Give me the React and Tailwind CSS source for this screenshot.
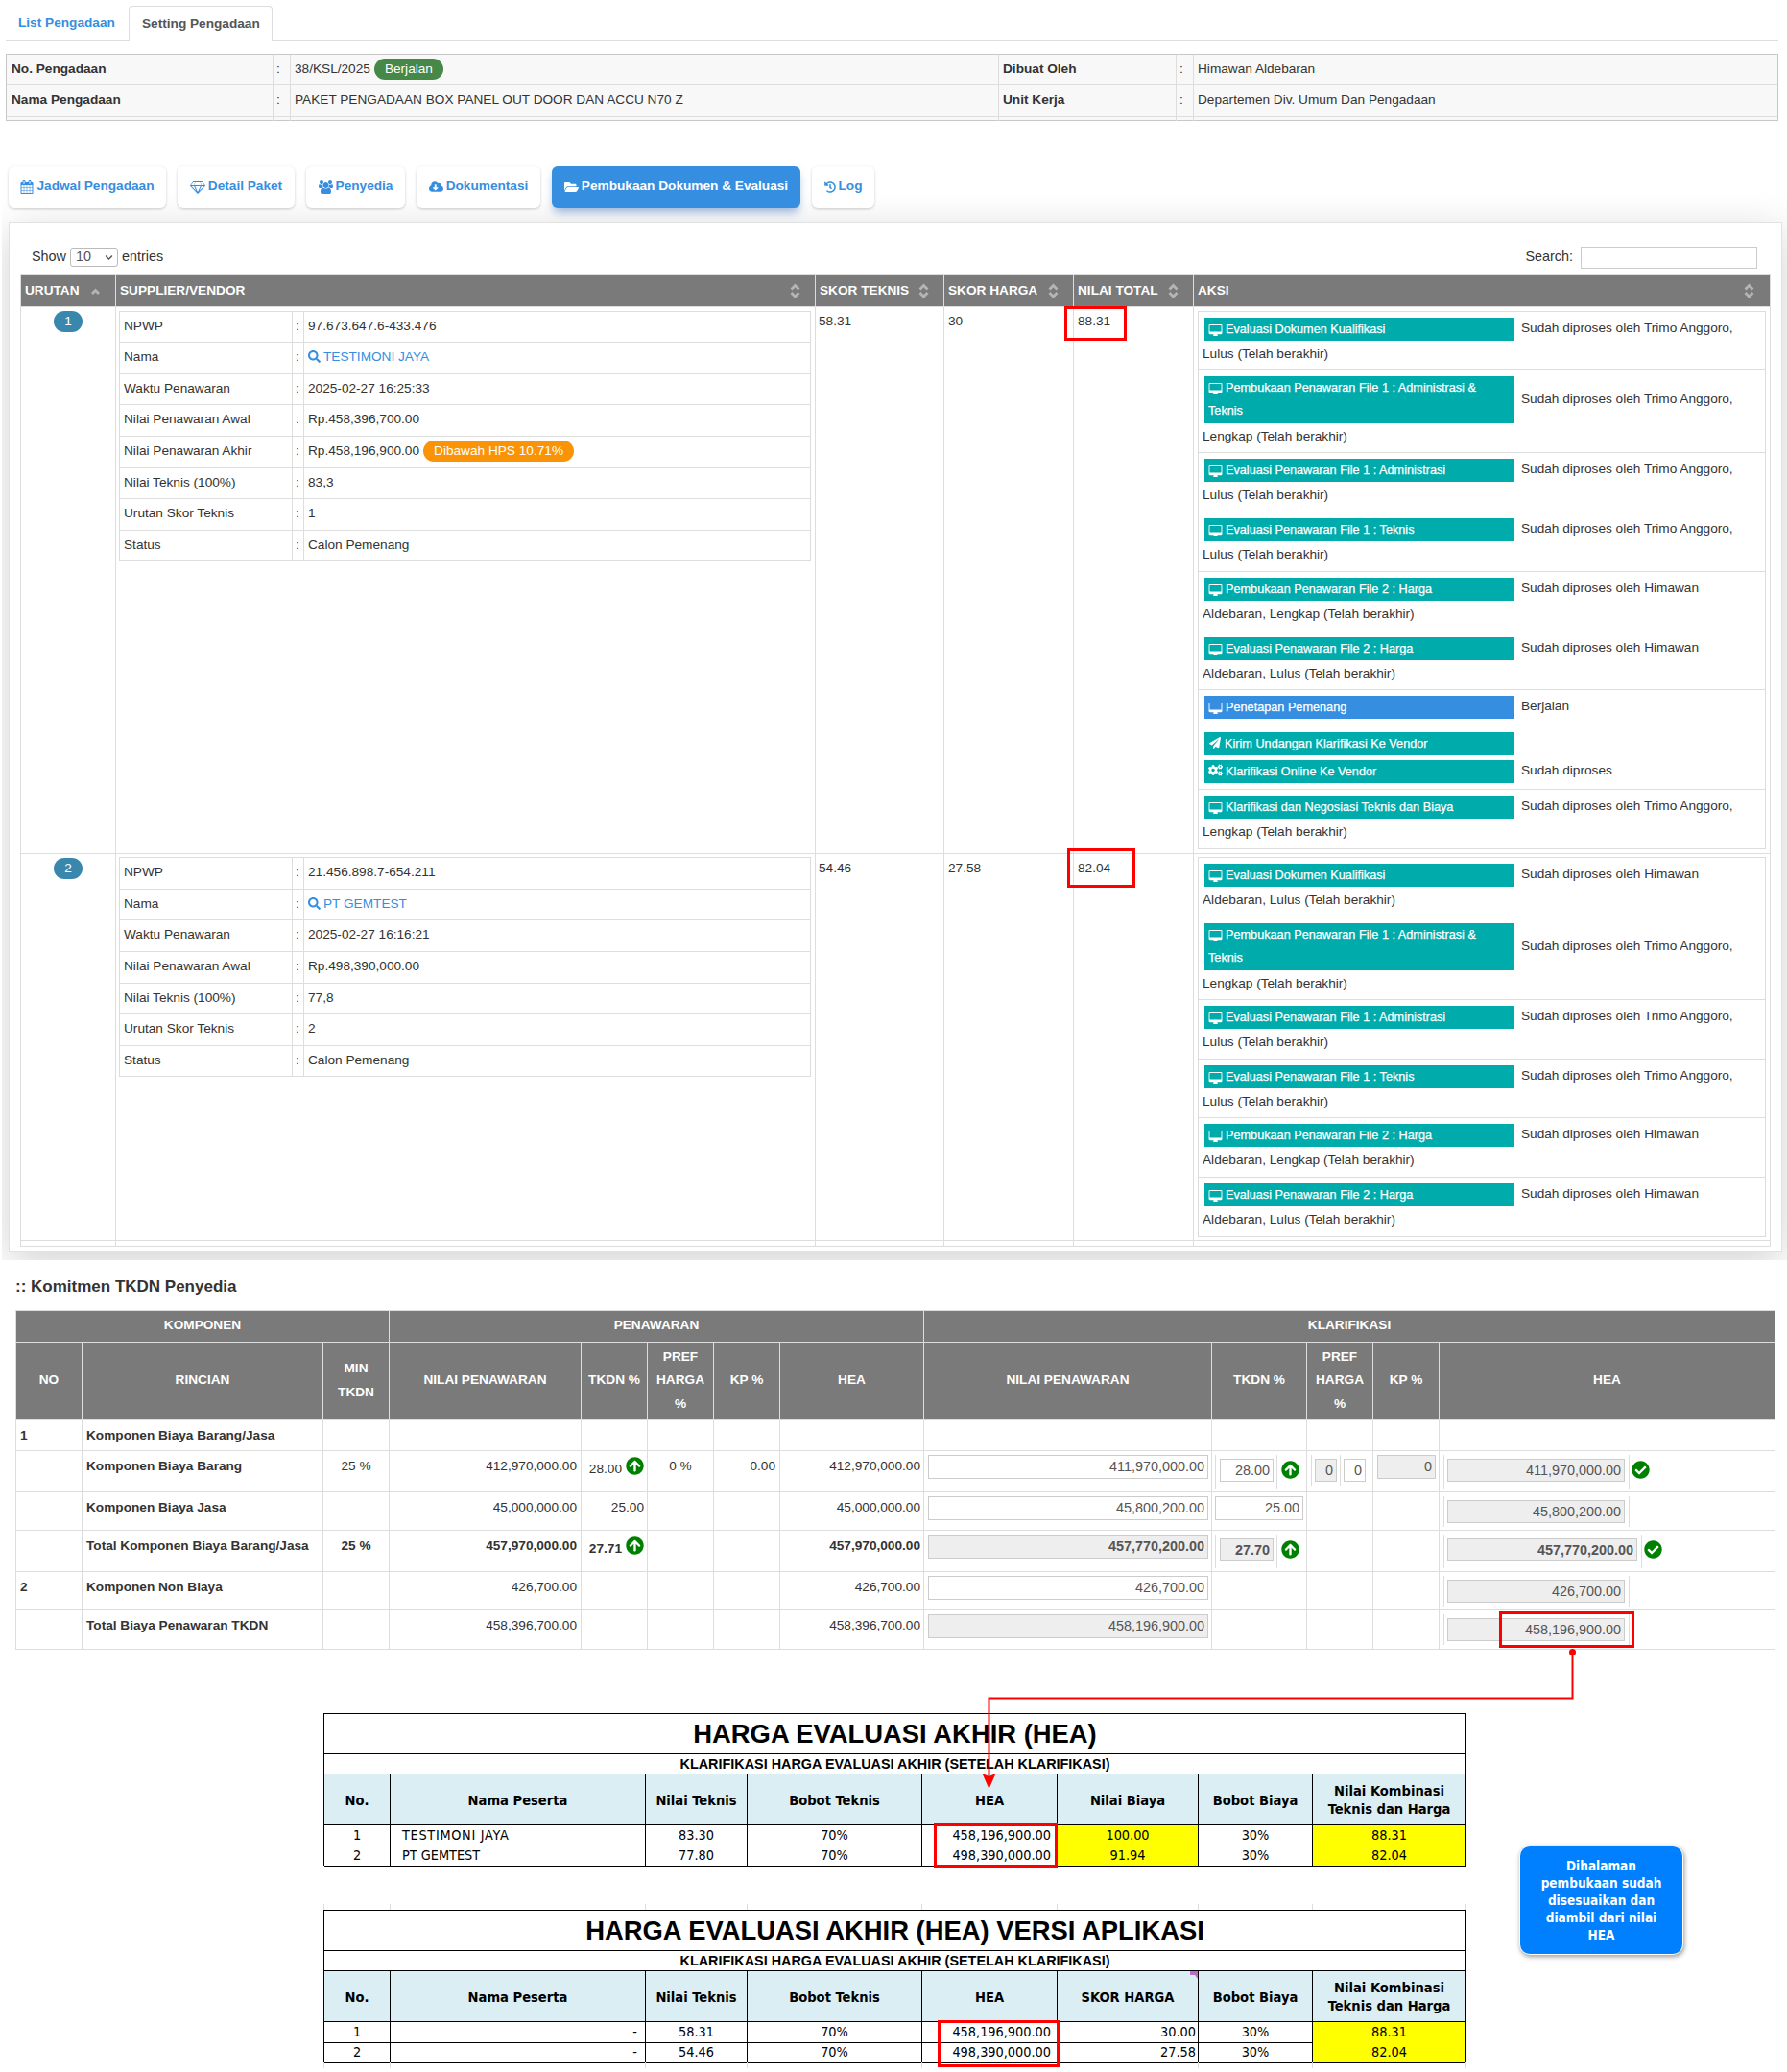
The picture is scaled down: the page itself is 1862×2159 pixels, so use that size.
import React from "react";
import {
  FaCloudDownloadAlt,
  FaFolderOpen,
  FaHistory,
  FaSearch,
  FaPaperPlane,
  FaCogs,
  FaArrowCircleUp,
  FaCheckCircle,
  FaChevronDown,
} from "react-icons/fa";

const Desktop = () => (
  <svg viewBox="0 0 2048 1792" className="inline-block h-[13px] w-[15px] shrink-0" fill="currentColor">
    <path d="M1856 992v-832q0-13-9.5-22.5t-22.5-9.5h-1600q-13 0-22.5 9.5t-9.5 22.5v832q0 13 9.5 22.5t22.5 9.5h1600q13 0 22.5-9.5t9.5-22.5zm128-832v1088q0 66-47 113t-113 47h-544q0 37 16 77.5t32 71 16 43.5q0 26-19 45t-45 19h-512q-26 0-45-19t-19-45q0-14 16-44t32-70 16-78h-544q-66 0-113-47t-47-113v-1088q0-66 47-113t113-47h1600q66 0 113 47t47 113z" />
  </svg>
);

const Calendar = () => (
  <svg viewBox="0 0 1792 1792" className="h-[14px] w-[14px]" fill="currentColor">
    <path d="M192 1664h288v-288h-288v288zm352 0h320v-288h-320v288zm-352-352h288v-320h-288v320zm352 0h320v-320h-320v320zm-352-384h288v-288h-288v288zm736 736h320v-288h-320v288zm-384-736h320v-288h-320v288zm768 736h288v-288h-288v288zm-384-352h320v-320h-320v320zm-352-864v-288q0-13-9.5-22.5t-22.5-9.5h-64q-13 0-22.5 9.5t-9.5 22.5v288q0 13 9.5 22.5t22.5 9.5h64q13 0 22.5-9.5t9.5-22.5zm736 864h288v-320h-288v320zm-384-384h320v-288h-320v288zm384 0h288v-288h-288v288zm32-480v-288q0-13-9.5-22.5t-22.5-9.5h-64q-13 0-22.5 9.5t-9.5 22.5v288q0 13 9.5 22.5t22.5 9.5h64q13 0 22.5-9.5t9.5-22.5zm384-64v1280q0 52-38 90t-90 38h-1408q-52 0-90-38t-38-90v-1280q0-52 38-90t90-38h128v-96q0-66 47-113t113-47h64q66 0 113 47t47 113v96h384v-96q0-66 47-113t113-47h64q66 0 113 47t47 113v96h128q52 0 90 38t38 90z" />
  </svg>
);

const Diamond = () => (
  <svg viewBox="0 0 2048 1792" className="h-[14px] w-[16px]" fill="currentColor">
    <path d="M212 768l623 665-300-665h-323zm812 772l349-772h-698zm-538-900l204-384h-262l-288 384h346zm727 793l623-665h-323zm-683-793h988l-204-384h-580zm1032 0h346l-288-384h-262zM1651 154l384 512q14 18 13 41.5t-17 40.5l-960 1024q-18 20-47 20t-47-20l-960-1024q-16-17-17-40.5t13-41.5l384-512q18-26 51-26h1152q33 0 51 26z" fillRule="evenodd" />
  </svg>
);

const Users = () => (
  <svg viewBox="0 0 1920 1792" className="h-[14px] w-[15px]" fill="currentColor">
    <path d="M593 896q-162 5-265 128h-134q-82 0-138-40.5t-56-118.5q0-353 124-353 6 0 43.5 21t97.5 42.5 119 21.5q67 0 133-23-5 37-5 66 0 139 81 256zm1071 637q0 120-73 189.5t-194 69.5h-874q-121 0-194-69.5t-73-189.5q0-53 3.5-103.5t14-109 26.5-108.5 43-97.5 62-81 85.5-53.5 111.5-20q10 0 43 21.5t73 48 107 48 135 21.5 135-21.5 107-48 73-48 43-21.5q61 0 111.5 20t85.5 53.5 62 81 43 97.5 26.5 108.5 14 109 3.5 103.5zm-1024-1277q0 106-75 181t-181 75-181-75-75-181 75-181 181-75 181 75 75 181zm704 384q0 159-112.5 271.5t-271.5 112.5-271.5-112.5-112.5-271.5 112.5-271.5 271.5-112.5 271.5 112.5 112.5 271.5zm576 225q0 78-56 118.5t-138 40.5h-134q-103-123-265-128 81-117 81-256 0-29-5-66 66 23 133 23 59 0 119-21.5t97.5-42.5 43.5-21q124 0 124 353zm-128-609q0 106-75 181t-181 75-181-75-75-181 75-181 181-75 181 75 75 181z" />
  </svg>
);

const Sort = ({ upOnly }) => (
  <svg viewBox="0 0 11 16" className="h-4 w-[11px]" fill="none" stroke="#b5b5b5" strokeWidth="2.8">
    <path d={upOnly ? "M2 11 5.5 7.5 9 11" : "M1.5 6.5 5.5 2.5 9.5 6.5M1.5 10 5.5 14 9.5 10"} />
  </svg>
);

const INFO = [
  { h: "h-8", a: "No. Pengadaan", b: "38/KSL/2025", badge: "Berjalan", c: "Dibuat Oleh", d: "Himawan Aldebaran" },
  { h: "h-[33px]", a: "Nama Pengadaan", b: "PAKET PENGADAAN BOX PANEL OUT DOOR DAN ACCU N70 Z", c: "Unit Kerja", d: "Departemen Div. Umum Dan Pengadaan" },
  { h: "h-1", a: "", b: "", c: "", d: "", last: true },
];

const NAV = [
  { w: "w-[164px]", icon: <Calendar />, label: "Jadwal Pengadaan" },
  { w: "w-[122px]", icon: <Diamond />, label: "Detail Paket" },
  { w: "w-[103px]", icon: <Users />, label: "Penyedia" },
  { w: "w-[129px]", icon: <FaCloudDownloadAlt className="h-[13px] w-[15px]" />, label: "Dokumentasi" },
  { w: "w-[259px]", icon: <FaFolderOpen className="h-[14px] w-[15px]" />, label: "Pembukaan Dokumen & Evaluasi", active: true },
  { w: "w-[65px]", icon: <FaHistory className="h-[12px] w-[12px]" />, label: "Log" },
];

const VENDOR_A = [
  ["h-8", "NPWP", "97.673.647.6-433.476"],
  ["h-[33px]", "Nama", "TESTIMONI JAYA", "link"],
  ["h-8", "Waktu Penawaran", "2025-02-27 16:25:33"],
  ["h-[33px]", "Nilai Penawaran Awal", "Rp.458,396,700.00"],
  ["h-[33px]", "Nilai Penawaran Akhir", "Rp.458,196,900.00", "badge"],
  ["h-8", "Nilai Teknis (100%)", "83,3"],
  ["h-[33px]", "Urutan Skor Teknis", "1"],
  ["h-8", "Status", "Calon Pemenang"],
];

const VENDOR_B = [
  ["h-[33px]", "NPWP", "21.456.898.7-654.211"],
  ["h-8", "Nama", "PT GEMTEST", "link"],
  ["h-[33px]", "Waktu Penawaran", "2025-02-27 16:16:21"],
  ["h-[33px]", "Nilai Penawaran Awal", "Rp.498,390,000.00"],
  ["h-8", "Nilai Teknis (100%)", "77,8"],
  ["h-[33px]", "Urutan Skor Teknis", "2"],
  ["h-8", "Status", "Calon Pemenang"],
];

const TRIMO = "Sudah diproses oleh Trimo Anggoro,";
const HIM = "Sudah diproses oleh Himawan";
const F1 = "Pembukaan Penawaran File 1 : Administrasi & Teknis";

const ACTIONS_A = [
  { h: "h-[61px]", label: "Evaluasi Dokumen Kualifikasi", t: TRIMO, s: "Lulus (Telah berakhir)" },
  { h: "h-[86px]", label: F1, tall: true, t: TRIMO, s: "Lengkap (Telah berakhir)" },
  { h: "h-[62px]", label: "Evaluasi Penawaran File 1 : Administrasi", t: TRIMO, s: "Lulus (Telah berakhir)" },
  { h: "h-[62px]", label: "Evaluasi Penawaran File 1 : Teknis", t: TRIMO, s: "Lulus (Telah berakhir)" },
  { h: "h-[62px]", label: "Pembukaan Penawaran File 2 : Harga", t: HIM, s: "Aldebaran, Lengkap (Telah berakhir)" },
  { h: "h-[61px]", label: "Evaluasi Penawaran File 2 : Harga", t: HIM, s: "Aldebaran, Lulus (Telah berakhir)" },
  { h: "h-[38px]", label: "Penetapan Pemenang", t: "Berjalan", blue: true },
  {
    h: "h-[66px]",
    label: "Kirim Undangan Klarifikasi Ke Vendor",
    icon: <FaPaperPlane className="h-[12px] w-[14px] shrink-0" />,
    t: "",
    extra: "Klarifikasi Online Ke Vendor",
    te: "Sudah diproses",
  },
  { h: "h-[62px]", label: "Klarifikasi dan Negosiasi Teknis dan Biaya", t: TRIMO, s: "Lengkap (Telah berakhir)" },
];

const ACTIONS_B = [
  { h: "h-[62px]", label: "Evaluasi Dokumen Kualifikasi", t: HIM, s: "Aldebaran, Lulus (Telah berakhir)" },
  { h: "h-[86px]", label: F1, tall: true, t: TRIMO, s: "Lengkap (Telah berakhir)" },
  { h: "h-[62px]", label: "Evaluasi Penawaran File 1 : Administrasi", t: TRIMO, s: "Lulus (Telah berakhir)" },
  { h: "h-[61px]", label: "Evaluasi Penawaran File 1 : Teknis", t: TRIMO, s: "Lulus (Telah berakhir)" },
  { h: "h-[62px]", label: "Pembukaan Penawaran File 2 : Harga", t: HIM, s: "Aldebaran, Lengkap (Telah berakhir)" },
  { h: "h-[62px]", label: "Evaluasi Penawaran File 2 : Harga", t: HIM, s: "Aldebaran, Lulus (Telah berakhir)" },
];

function VendorTable({ rows }) {
  return (
    <div className="w-[721px] border-l border-t border-[#ddd]">
      {rows.map(([h, label, value, kind]) => (
        <div key={label} className={`${h} grid grid-cols-[180px_12px_528px] leading-[29px]`}>
          <div className="border-b border-r border-[#ddd] pl-1">{label}</div>
          <div className="border-b border-r border-[#ddd] pl-[3px]">:</div>
          <div className="flex border-b border-r border-[#ddd] pl-1">
            {kind === "link" ? (
              <span className="flex text-[#368ee0]">
                <FaSearch className="mr-[3px] mt-2 h-[13px] w-[13px]" />
                {value}
              </span>
            ) : (
              value
            )}
            {kind === "badge" && (
              <span className="ml-1 mt-1 h-[22px] rounded-[11px] bg-[#fa9406] px-[11px] leading-[22px] text-white">
                Dibawah HPS 10.71%
              </span>
            )}
          </div>
        </div>
      ))}
    </div>
  );
}

function ActionButton({ label, icon, blue, tall }) {
  return (
    <div
      className={`ml-0.5 flex w-[323px] shrink-0 items-start px-1 text-[12.7px] leading-6 text-white [-webkit-text-stroke:0.25px_white] ${
        blue ? "bg-[#368ee0]" : "bg-[#00abab]"
      } ${tall ? "h-[49px]" : "h-6"}`}
    >
      <p className="w-full">
        <span className="mr-[3px] inline-block align-[-1px] leading-none">{icon || <Desktop />}</span>
        {label}
      </p>
    </div>
  );
}

function ActionTable({ rows }) {
  return (
    <div className="w-[592px] border-l border-t border-[#ddd]">
      {rows.map((r) => (
        <div key={r.label} className={`${r.h} border-b border-r border-[#ddd] pl-1 pt-1.5`}>
          <div className="flex items-center gap-[7px]">
            <ActionButton {...r} />
            <span className="pb-0.5 leading-[22px]">{r.t}</span>
          </div>
          {r.extra && (
            <div className="mt-[5px] flex items-center gap-[7px]">
              <ActionButton label={r.extra} icon={<FaCogs className="h-[13px] w-[15px] shrink-0" />} />
              <span className="pb-0.5 leading-[22px]">{r.te}</span>
            </div>
          )}
          {r.s && <div className="mt-0.5 leading-6">{r.s}</div>}
        </div>
      ))}
    </div>
  );
}

const MAIN_COLS = "grid grid-cols-[99px_729px_134px_135px_125px_601px]";
const HEADS = ["URUTAN", "SUPPLIER/VENDOR", "SKOR TEKNIS", "SKOR HARGA", "NILAI TOTAL", "AKSI"];

function MainRow({ h, no, pad, vendor, teknis, harga, total, actions }) {
  const cell = "border-b border-r border-[#ddd]";
  return (
    <div className={`${MAIN_COLS} ${h}`}>
      <div className={`${cell} flex justify-center pt-1`}>
        <span className="h-[22px] w-[30px] rounded-[11px] bg-[#3a87ad] text-center leading-[22px] text-white">{no}</span>
      </div>
      <div className={`${cell} pl-[3px] ${pad}`}>
        <VendorTable rows={vendor} />
      </div>
      <div className={`${cell} pl-[3px] pt-[3px] leading-6`}>{teknis}</div>
      <div className={`${cell} pl-1 pt-[3px] leading-6`}>{harga}</div>
      <div className={`${cell} pl-1 pt-[3px] leading-6`}>{total}</div>
      <div className={`${cell} pl-1 ${pad}`}>
        <ActionTable rows={actions} />
      </div>
    </div>
  );
}

const TKDN_COLS = "grid grid-cols-[69px_251px_69px_200px_69px_69px_69px_150px_300px_99px_69px_69px_350px]";

const Field = ({ w, gray, bold, h = "h-[25px]", children }) => (
  <div
    className={`${w} ${h} border border-[#ccc] pr-[3px] text-right text-[14.4px] leading-[22px] text-[#555] ${
      gray ? "bg-[#eee]" : "bg-white"
    } ${bold ? "font-bold" : ""}`}
  >
    {children}
  </div>
);

const Up = () => <FaArrowCircleUp className="h-[19px] w-[19px] text-[#008000]" />;

const UpField = ({ value, gray, bold }) => (
  <div className="ml-[3px] mt-1 flex h-[35px] border-l border-[#ddd] pl-1 pt-1">
    <Field w="w-14" h="h-6" gray={gray} bold={bold}>{value}</Field>
    <div className="-mt-1 ml-[3px] h-[35px] border-l border-[#ddd]" />
    <div className="ml-1 mt-0.5">
      <Up />
    </div>
  </div>
);

const Hea = ({ value, h, wide, bold, ok }) => (
  <div className={`ml-1 mt-1 flex border-l border-[#ddd] pl-[3px] ${h}`}>
    <div className="pt-1">
      <Field w={wide ? "w-[198px]" : "w-[185px]"} h="h-6" gray bold={bold}>{value}</Field>
    </div>
    <div className={`ml-1 border-l border-[#ddd] ${h}`} />
    {ok && <FaCheckCircle className="ml-0.5 mt-1.5 h-[19px] w-[19px] text-[#008000]" />}
  </div>
);

const TKDN_ROWS = [
  { h: "h-8", no: "1", name: "Komponen Biaya Barang/Jasa" },
  {
    h: "h-[43px]", name: "Komponen Biaya Barang", min: "25 %", np: "412,970,000.00", up: "28.00", pref: "0 %", kp: "0.00", hea: "412,970,000.00",
    knp: "411,970,000.00",
    ktk: <UpField value="28.00" />,
    kpref: (
      <div className="ml-1 mt-1 flex h-8 border-l border-[#ddd] pl-[3px] pt-1">
        <Field w="w-[23px]" h="h-6" gray>0</Field>
        <div className="-mt-1 ml-[3px] h-8 border-l border-[#ddd]" />
        <div className="ml-[3px]">
          <Field w="w-[23px]" h="h-6">0</Field>
        </div>
      </div>
    ),
    kkp: <div className="ml-1 mt-1"><Field w="w-[61px]" gray>0</Field></div>,
    khea: <Hea value="411,970,000.00" h="h-[35px]" ok />,
  },
  {
    h: "h-10", name: "Komponen Biaya Jasa", np: "45,000,000.00", tk: "25.00", hea: "45,000,000.00",
    knp: "45,800,200.00",
    ktk: <div className="ml-[3px] mt-1"><Field w="w-[92px]">25.00</Field></div>,
    khea: <Hea value="45,800,200.00" h="h-8" />,
  },
  {
    h: "h-[43px]", name: "Total Komponen Biaya Barang/Jasa", min: "25 %", np: "457,970,000.00", up: "27.71", hea: "457,970,000.00", bold: true,
    knp: "457,770,200.00", kgray: true,
    ktk: <UpField value="27.70" gray bold />,
    khea: <Hea value="457,770,200.00" h="h-[35px]" wide bold ok />,
  },
  { h: "h-10", no: "2", name: "Komponen Non Biaya", np: "426,700.00", hea: "426,700.00", knp: "426,700.00", khea: <Hea value="426,700.00" h="h-8" /> },
  { h: "h-[41px]", name: "Total Biaya Penawaran TKDN", np: "458,396,700.00", hea: "458,396,700.00", knp: "458,196,900.00", kgray: true, khea: <Hea value="458,196,900.00" h="h-8" /> },
];

function TkdnTable() {
  const c = "border-b border-r border-[#ddd] pt-[3px] leading-[25px]";
  const hd = "flex items-center justify-center border-b border-r border-[#ddd] pb-px text-center leading-[24.4px]";
  return (
    <div className="ml-4 w-[1834px] border-l border-t border-[#ddd]">
      <div className="grid h-[33px] grid-cols-[389px_557px_887px] bg-[#7a7a7a] font-bold text-white">
        <div className={hd}>KOMPONEN</div>
        <div className={hd}>PENAWARAN</div>
        <div className={hd}>KLARIFIKASI</div>
      </div>
      <div className={`${TKDN_COLS} h-[81px] bg-[#7a7a7a] font-bold text-white`}>
        <div className={hd}>NO</div>
        <div className={hd}>RINCIAN</div>
        <div className={hd}>MIN<br />TKDN</div>
        <div className={hd}>NILAI PENAWARAN</div>
        <div className={hd}>TKDN %</div>
        <div className={hd}>PREF<br />HARGA<br />%</div>
        <div className={hd}>KP %</div>
        <div className={hd}>HEA</div>
        <div className={hd}>NILAI PENAWARAN</div>
        <div className={hd}>TKDN %</div>
        <div className={hd}>PREF<br />HARGA<br />%</div>
        <div className={hd}>KP %</div>
        <div className={hd}>HEA</div>
      </div>
      {TKDN_ROWS.map((r, i) => (
        <div key={r.name} className={`${TKDN_COLS} ${r.h} ${r.bold ? "font-bold" : ""}`}>
          <div className={`${c} pl-1 font-bold`}>{r.no}</div>
          <div className={`${c} whitespace-nowrap pl-1 font-bold`}>{r.name}</div>
          <div className={`${c} text-center`}>{r.min}</div>
          <div className={`${c} pr-1 text-right`}>{r.np}</div>
          <div className={`${c} pr-[3px] text-right`}>
            {r.up ? (
              <div className="flex items-start justify-end gap-1">
                <span className="pt-[3px]">{r.up}</span>
                <span className="pt-[3px]"><Up /></span>
              </div>
            ) : (
              r.tk
            )}
          </div>
          <div className={`${c} text-center`}>{r.pref}</div>
          <div className={`${c} pr-1 text-right`}>{r.kp}</div>
          <div className={`${c} pr-[3px] text-right`}>{r.hea}</div>
          <div className="border-b border-r border-[#ddd] pl-1 pt-1">
            {r.knp && <Field w="w-[292px]" gray={r.kgray} bold={r.bold}>{r.knp}</Field>}
          </div>
          <div className="border-b border-r border-[#ddd]">{r.ktk}</div>
          <div className="border-b border-r border-[#ddd]">{r.kpref}</div>
          <div className="border-b border-r border-[#ddd]">{r.kkp}</div>
          <div className={`border-b border-[#ddd] ${i === 0 ? "border-r" : ""}`}>{r.khea}</div>
        </div>
      ))}
    </div>
  );
}

const SHEET_COLS = "grid grid-cols-[69px_266px_106px_182px_141px_147px_119px_160px]";

function Sheet({ title, heads, rows, note, yellowBiaya }) {
  const b = "border-b border-r border-black";
  return (
    <div className="w-[1191px] border-l border-t border-black text-black">
      <div className={`${b} h-[42px] text-center text-[27.4px] font-bold leading-[41px]`}>{title}</div>
      <div className={`${b} h-[21px] text-center text-[14.4px] font-bold leading-[20px]`}>
        KLARIFIKASI HARGA EVALUASI AKHIR (SETELAH KLARIFIKASI)
      </div>
      <div className={`${SHEET_COLS} h-[53px] bg-[#daeef3] font-['DejaVu_Sans_Condensed','DejaVu_Sans',sans-serif] text-[14.6px] font-bold leading-[19px]`}>
        {heads.map((t, i) => (
          <div key={t} className={`${b} relative flex items-center justify-center whitespace-pre text-center`}>
            {t}
            {note && i === 5 && (
              <svg viewBox="0 0 8 8" className="absolute right-0 top-0 h-2 w-2">
                <path d="M0 0H8V8L5 4H0Z" fill="#b86fc6" />
              </svg>
            )}
          </div>
        ))}
      </div>
      {rows.map((r) => (
        <div key={r[0]} className={`${SHEET_COLS} h-[21px] text-center font-['DejaVu_Sans_Condensed','DejaVu_Sans',sans-serif] text-[14.35px] leading-[21px]`}>
          <div className={b}>{r[0]}</div>
          <div className={`${b} ${r[1] === "-" ? "pr-2 text-right" : "pl-3 text-left"} ${r[1].length > 12 ? "tracking-[0.7px]" : ""}`}>{r[1]}</div>
          <div className={b}>{r[2]}</div>
          <div className={b}>70%</div>
          <div className={`${b} pr-[6px] text-right`}>{r[3]}</div>
          <div className={`${b} ${yellowBiaya ? "bg-[#ff0]" : "pr-0.5 text-right"}`}>{r[4]}</div>
          <div className={b}>30%</div>
          <div className={`${b} bg-[#ff0]`}>{r[5]}</div>
        </div>
      ))}
    </div>
  );
}

const Ticks = () => (
  <div className={`${SHEET_COLS} h-1.5 w-[1191px] border-l border-[#ddd]`}>
    {[0, 1, 2, 3, 4, 5, 6, 7].map((i) => (
      <div key={i} className="border-r border-[#ddd]" />
    ))}
  </div>
);

export default function App() {
  return (
    <div className="relative h-[2159px] w-[1862px] overflow-hidden bg-white font-['Liberation_Sans',Arial,sans-serif] text-[13.65px] text-[#333]">
      <div className="ml-1.5 flex h-[43px] w-[1847px] items-end border-b border-[#ddd] font-bold">
        <div className="w-32 pl-[13px] leading-[36px] text-[#368ee0]">List Pengadaan</div>
        <div className="-mb-px h-[37px] w-[150px] rounded-t border border-b-0 border-[#ddd] bg-white pl-[13px] leading-[35px] text-[#555]">
          Setting Pengadaan
        </div>
      </div>

      <div className="ml-1.5 mt-[13px] h-[70px] w-[1847px] border border-[#c8c8c8] bg-[#f8f8f8]">
        {INFO.map((r, i) => (
          <div
            key={i}
            className={`${r.h} grid grid-cols-[278px_18px_738px_185px_18px_608px] leading-[29px] ${r.last ? "" : "border-b border-[#ddd]"}`}
          >
            <div className="border-r border-[#ddd] pl-[5px] font-bold">{r.a}</div>
            <div className="border-r border-[#ddd] pl-[3px]">{r.last ? "" : ":"}</div>
            <div className="flex border-r border-[#ddd] pl-1">
              {r.b}
              {r.badge && (
                <span className="ml-1 mt-1 h-[22px] rounded-[11px] bg-[#468847] px-[11px] leading-[22px] text-white">{r.badge}</span>
              )}
            </div>
            <div className="border-r border-[#ddd] pl-1 font-bold">{r.c}</div>
            <div className="border-r border-[#ddd] pl-[3px]">{r.last ? "" : ":"}</div>
            <div className="pl-1">{r.d}</div>
          </div>
        ))}
      </div>

      <div className="relative z-10 ml-[9px] mt-[47px] flex gap-3 font-bold">
        {NAV.map((n) => (
          <div
            key={n.label}
            className={`${n.w} flex h-11 items-center justify-center gap-[3px] whitespace-nowrap rounded-md pb-px ${
              n.active
                ? "bg-[#368ee0] text-white shadow-[0_6px_10px_-2px_rgba(54,110,190,0.5)]"
                : "bg-white text-[#368ee0] shadow-[0_1px_3px_rgba(0,0,0,0.2)]"
            }`}
          >
            {n.icon}
            {n.label}
          </div>
        ))}
      </div>

      <div className="-mt-[37px] ml-0.5 h-[1133px] overflow-hidden">
        <div className="ml-[7px] mt-[51px] h-[1074px] w-[1848px] border border-[#e2e2e2] bg-white pl-[11px] shadow-[0_10px_40px_rgba(0,0,0,0.18)]">
          <div className="flex h-[54px] items-start pl-3 pr-[25px] pt-[25px] text-[14.4px]">
            <span className="leading-[20px]">Show</span>
            <div className="ml-1 mt-px flex h-5 w-[50px] items-center justify-between rounded-[3px] border border-[#bbb] pl-[5px] pr-1 text-[#555]">
              10
              <FaChevronDown className="h-[9px] w-[9px]" />
            </div>
            <span className="ml-1 leading-[20px]">entries</span>
            <span className="ml-auto leading-[20px]">Search:</span>
            <div className="ml-2 h-[23px] w-[184px] border border-[#ccc]" />
          </div>
          <div className="w-[1824px] border-l border-t border-[#ddd]">
            <div className={`${MAIN_COLS} h-[33px] bg-[#7a7a7a] font-bold text-white`}>
              {HEADS.map((t, i) => (
                <div
                  key={t}
                  className={`flex items-center justify-between whitespace-nowrap border-b border-r border-[#ddd] pl-1 ${
                    i === 5 ? "pr-4" : "pr-[15px]"
                  }`}
                >
                  {t}
                  <Sort upOnly={i === 0} />
                </div>
              ))}
            </div>
            <MainRow h="h-[570px]" pad="pt-1" no="1" vendor={VENDOR_A} teknis="58.31" harga="30" total="88.31" actions={ACTIONS_A} />
            <MainRow h="h-[403px]" pad="pt-[3px]" no="2" vendor={VENDOR_B} teknis="54.46" harga="27.58" total="82.04" actions={ACTIONS_B} />
            <div className={`${MAIN_COLS} h-1.5`}>
              {HEADS.map((t) => (
                <div key={t} className="border-b border-r border-[#ddd]" />
              ))}
            </div>
          </div>
        </div>
      </div>

      <h2 className="h-[52px] pl-4 text-[17px] font-bold leading-[55px]">:: Komitmen TKDN Penyedia</h2>

      <TkdnTable />

      <div className="ml-[337px] mt-[66px]">
        <Sheet
          title="HARGA EVALUASI AKHIR (HEA)"
          heads={["No.", "Nama Peserta", "Nilai Teknis", "Bobot Teknis", "HEA", "Nilai Biaya", "Bobot Biaya", "Nilai Kombinasi\nTeknis dan Harga"]}
          rows={[
            ["1", "TESTIMONI JAYA", "83.30", "458,196,900.00", "100.00", "88.31"],
            ["2", "PT GEMTEST", "77.80", "498,390,000.00", "91.94", "82.04"],
          ]}
          yellowBiaya
        />
        <div className="mt-10">
          <Ticks />
          <Sheet
            title="HARGA EVALUASI AKHIR (HEA) VERSI APLIKASI"
            heads={["No.", "Nama Peserta", "Nilai Teknis", "Bobot Teknis", "HEA", "SKOR HARGA", "Bobot Biaya", "Nilai Kombinasi\nTeknis dan Harga"]}
            rows={[
              ["1", "-", "58.31", "458,196,900.00", "30.00", "88.31"],
              ["2", "-", "54.46", "498,390,000.00", "27.58", "82.04"],
            ]}
            note
          />
          <Ticks />
        </div>
      </div>

      {/* annotations drawn over the page */}
      <div className="absolute left-[1109px] top-[319px] z-20 h-9 w-[65px] border-[3px] border-[#f00]" />
      <div className="absolute left-[1112px] top-[884px] z-20 h-[41px] w-[71px] border-[3px] border-[#f00]" />
      <div className="absolute left-[1562px] top-[1679px] z-20 h-[38px] w-[141px] border-[3px] border-[#f00]" />
      <div className="absolute left-[973px] top-[1900px] z-20 h-[46px] w-[129px] border-[3px] border-[#f00]" />
      <div className="absolute left-[977px] top-[2105px] z-20 h-[49px] w-[127px] border-[3px] border-[#f00]" />
      <svg className="absolute left-[1020px] top-[1715px] z-20 h-[152px] w-[625px]" viewBox="0 0 625 152">
        <path d="M618.5 6V54.5H10.5V136" fill="none" stroke="#f00" strokeWidth="2" />
        <circle cx="618.5" cy="6.5" r="3.5" fill="#f00" />
        <path d="M3.5 133 10.5 136 17.5 133 10.5 149Z" fill="#f00" />
      </svg>
      <div className="absolute left-[1583px] top-[1923px] z-20 flex h-[114px] w-[171px] items-center justify-center rounded-[11px] border border-white bg-[#0080ff] text-center font-['DejaVu_Sans_Condensed','DejaVu_Sans',sans-serif] text-[13.5px] font-bold leading-[18px] text-white shadow-[1px_2px_5px_rgba(0,0,0,0.4)]">
        Dihalaman<br />pembukaan sudah<br />disesuaikan dan<br />diambil dari nilai<br />HEA
      </div>
    </div>
  );
}
